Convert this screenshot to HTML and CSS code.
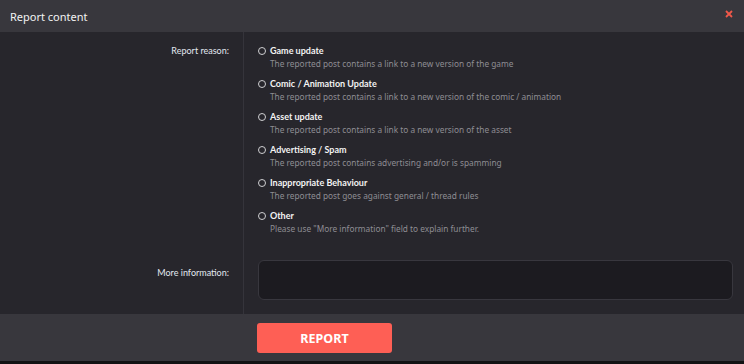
FILE: index.html
```html
<!DOCTYPE html>
<html lang="en">
<head>
  <meta charset="UTF-8">
  <title>Report content</title>
  <link rel="stylesheet" href="styles.css">
</head>
<body>
  <div class="overlay">
    <div class="modal">
      <header class="modal-head">
        <h1>Report content</h1>
        <svg class="close" width="8" height="8" viewBox="0 0 8 8">
          <path d="M1 1L7 7M7 1L1 7" stroke="#f0584a" stroke-width="1.8"/>
        </svg>
      </header>

      <div class="modal-body">
        <div class="label-cell reason-label">Report reason:</div>
        <div class="field-cell">
          <ul class="reasons">
            <li class="reason">
              <span class="radio"></span>
              <div>
                <div class="reason-title">Game update</div>
                <div class="reason-hint">The reported post contains a link to a new version of the game</div>
              </div>
            </li>
            <li class="reason">
              <span class="radio"></span>
              <div>
                <div class="reason-title">Comic / Animation Update</div>
                <div class="reason-hint">The reported post contains a link to a new version of the comic / animation</div>
              </div>
            </li>
            <li class="reason">
              <span class="radio"></span>
              <div>
                <div class="reason-title">Asset update</div>
                <div class="reason-hint">The reported post contains a link to a new version of the asset</div>
              </div>
            </li>
            <li class="reason">
              <span class="radio"></span>
              <div>
                <div class="reason-title">Advertising / Spam</div>
                <div class="reason-hint">The reported post contains advertising and/or is spamming</div>
              </div>
            </li>
            <li class="reason">
              <span class="radio"></span>
              <div>
                <div class="reason-title">Inappropriate Behaviour</div>
                <div class="reason-hint">The reported post goes against general / thread rules</div>
              </div>
            </li>
            <li class="reason">
              <span class="radio"></span>
              <div>
                <div class="reason-title">Other</div>
                <div class="reason-hint">Please use "More information" field to explain further.</div>
              </div>
            </li>
          </ul>
        </div>

        <div class="label-cell info-label">More information:</div>
        <div class="field-cell info-cell">
          <div class="textarea"></div>
        </div>
      </div>

      <footer class="modal-foot">
        <button class="report-btn">REPORT</button>
      </footer>
    </div>
    <div class="below"></div>
  </div>
</body>
</html>
```

FILE: styles.css
```css
:root {
  --clr-head: #38373d;
  --clr-body: #27262c;
  --clr-line: #35343b;
  --clr-input: #1c1b20;
  --clr-red: #fe5f55;
  --clr-label: #e2e8f0;
  --clr-hint: #8e8d93;
}
*, *::before, *::after {box-sizing: border-box; margin: 0; padding: 0}
body {
  background: #111;
  font-family: 'Noto Sans', sans-serif;
  color: #fff;
}
.overlay {
  width: 744px;
  height: 364px;
  display: flex;
  flex-direction: column;
}
.modal {
  display: flex;
  flex-direction: column;
}
.modal-head {
  height: 32px;
  background: var(--clr-head);
  display: flex;
  align-items: center;
  justify-content: space-between;
  padding: 0 11px 0 10px;
}
.modal-head h1 {
  font-size: 11px;
  font-weight: 400;
  color: #f2f2f2;
}
.close {
  display: block;
  margin-bottom: 4px;
}
.modal-body {
  background: var(--clr-body);
  display: grid;
  grid-template-columns: 244px 1fr;
  height: 282px;
  grid-template-rows: auto 1fr;
}
.label-cell {
  border-right: 1px solid var(--clr-line);
  text-align: right;
  padding-right: 14px;
  font-family: 'Lato', sans-serif;
  font-size: 9px;
  color: var(--clr-label);
}
.reason-label {
  padding-top: 13px;
}
.info-label {
  padding-top: 25px;
}
.field-cell {
  padding: 12px 0 0 14px;
}
.reasons {
  list-style: none;
}
.reason {
  display: flex;
  gap: 4px;
  height: 33px;
}
.radio {
  width: 8px;
  height: 8px;
  margin-top: 3px;
  border: 1px solid #cfcfd2;
  border-radius: 50%;
}
.reason-title {
  font-family: 'Lato', sans-serif;
  font-size: 9px;
  font-weight: 700;
  line-height: 14px;
  color: #f3f3f3;
}
.reason-hint {
  font-size: 8.3px;
  line-height: 12px;
  color: var(--clr-hint);
}
.info-cell {
  padding: 18px 11px 15px 14px;
}
.textarea {
  height: 40px;
  background: var(--clr-input);
  border: 1px solid #38373e;
  border-radius: 6px;
}
.modal-foot {
  height: 47px;
  background: var(--clr-head);
  padding: 9px 0 0 257px;
}
.report-btn {
  width: 135px;
  height: 30px;
  border: 0;
  border-radius: 3px;
  background: var(--clr-red);
  color: #fff;
  font-family: 'Noto Sans', sans-serif;
  font-weight: 700;
  font-size: 12.5px;
}
.below {
  flex: 1;
  background: #121214;
}
```
